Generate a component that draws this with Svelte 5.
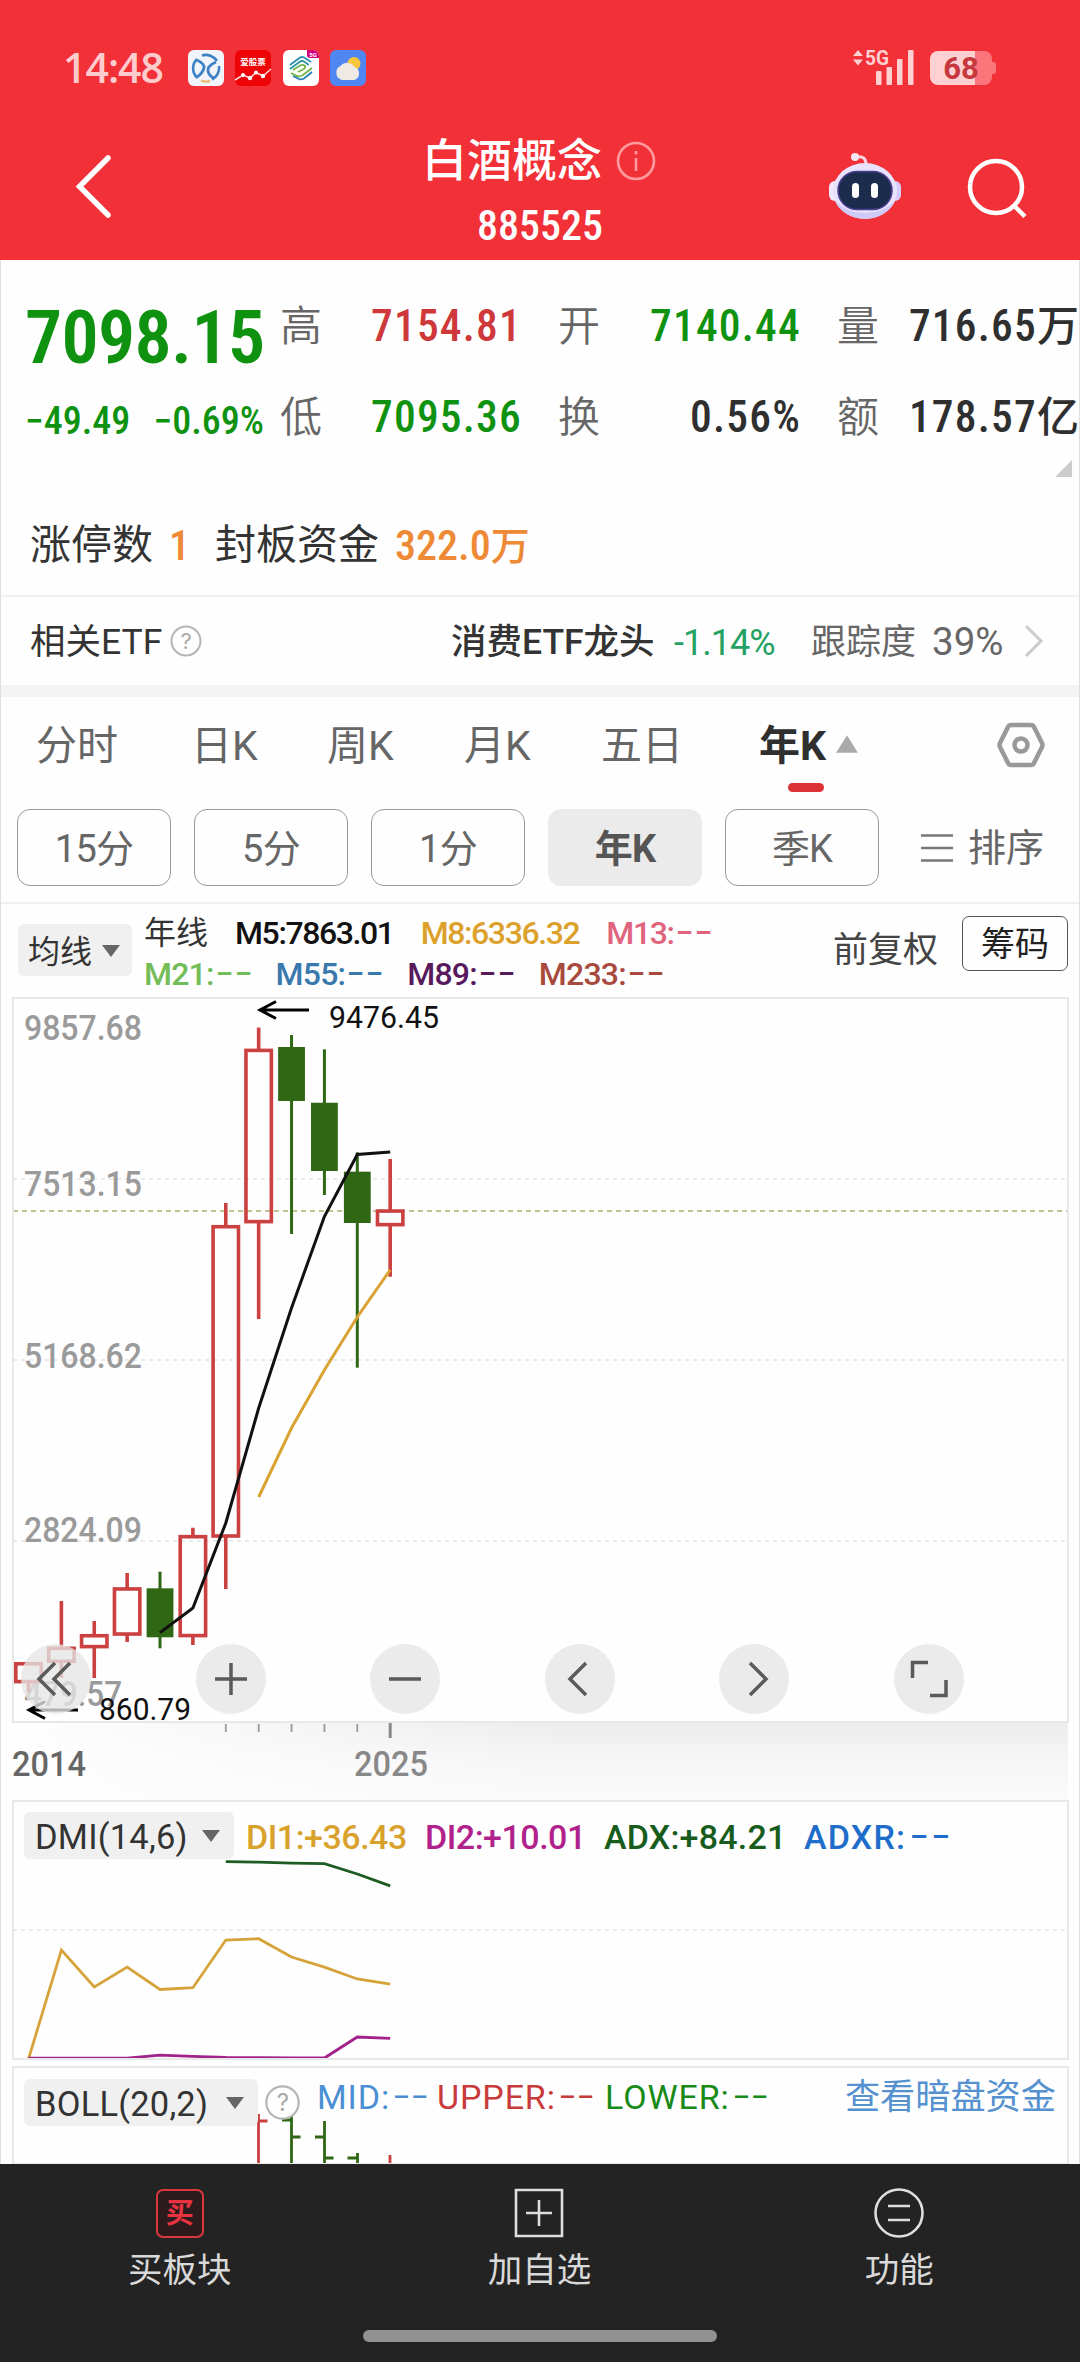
<script>
    //Quote header
    const quotes = [
        { label: "高", value: "7154.81", tone: "up" },
        { label: "开", value: "7140.44", tone: "down" },
        { label: "量", value: "716.65", unit: "万", tone: "flat" },
        { label: "低", value: "7095.36", tone: "down" },
        { label: "换", value: "0.56%", tone: "flat" },
        { label: "额", value: "178.57", unit: "亿", tone: "flat" }
    ];

    const tabs = ["分时", "日K", "周K", "月K", "五日"];
    const periods = ["15分", "5分", "1分", "年K", "季K"];
    let period = $state("年K");

    const averages = [
        [["M5:7863.01", "m5"], ["M8:6336.32", "m8"], ["M13:--", "m13"]],
        [["M21:--", "m21"], ["M55:--", "m55"], ["M89:--", "m89"], ["M233:--", "m233"]]
    ];
    const dmi = [["DI1:+36.43", "di1"], ["DI2:+10.01", "di2"], ["ADX:+84.21", "adx"], ["ADXR:--", "adxr"]];
    const boll = [["MID:--", "mid"], ["UPPER:--", "upper"], ["LOWER:--", "lower"]];

    //Main chart: [open, close, high, low] for each year
    const top = 9857.68;
    const bottom = 479.57;
    const chartH = 724;
    const candles = [
        [1003, 1234, 1257, 860.79],
        [1266, 1434, 2047, 1050],
        [1456, 1597, 1788, 1050],
        [1619, 2203, 2410, 1516],
        [2211, 1577, 2427, 1434],
        [1599, 2880, 2997, 1477],
        [2889, 6895, 7202, 2203],
        [6961, 9179, 9476.45, 5700],
        [9223, 8524, 9378, 6801],
        [8501, 7617, 9193, 7306],
        [7608, 6943, 7859, 5069],
        [6922, 7098.15, 7772, 6248]
    ];
    const ma5 = [1637, 1956, 3057, 4547, 5842, 7027, 7830, 7863];
    const ma8 = [3394, 4288, 5039, 5726, 6336];
    const scale = [
        ["9857.68", 42],
        ["7513.15", 198],
        ["5168.62", 370],
        ["2824.09", 544],
        ["479.57", 708]
    ];

    //DMI panel
    const di1 = [0, 53, 35, 44.7, 33.8, 34.7, 57.9, 58.5, 49.6, 44.7, 38.9, 36.43];
    const di2 = [0.4, 0.4, 0.4, 0.4, 1.9, 1.3, 0.8, 0.7, 0.6, 0.5, 10.7, 10.01];
    const adx = [96, 95.7, 95.3, 95, 90, 84.21];

    const cx = (i) => 15.5 + i * 32.88;
    const py = (p) => ((top - p) / (top - bottom)) * chartH;
    const dy = (v) => 258 - v * 2.056;

    //Series are right aligned on the last candle
    function line(values, toY) {
        const start = candles.length - values.length;
        return values.map((v, i) => `${cx(start + i).toFixed(1)},${toY(v).toFixed(1)}`).join(" ");
    }
</script>

<!-- Empty readings get wider dashes -->
{#snippet reading(text, color)}
    {#if text.endsWith("--")}
        <span class={color}>{text.slice(0, -2)}<i class="dash">--</i></span>
    {:else}
        <span class={color}>{text}</span>
    {/if}
{/snippet}

<div class="page">
    <header>
        <div class="status">
            <span class="time">14:48</span>
            <div class="apps">
                <svg viewBox="0 0 36 36">
                    <rect width="36" height="36" rx="6" fill="#f1f5fb"/>
                    <path d="M9.500 28A13 13 0 0 1 9 9M14 5.500A13 13 0 0 1 29 11M31 16A13 13 0 0 1 24 29.500" fill="none" stroke="#3f82c4" stroke-width="2.600"/>
                    <path d="M13 30.500a13 13 0 0 0 9 0.500" fill="none" stroke="#e9bd72" stroke-width="2.400"/>
                    <path d="M9 10Q17 14 16 18Q14 24 9 27M28 12Q19 16 20 21Q21 26 26 28" fill="none" stroke="#3f82c4" stroke-width="2.800"/>
                </svg>
                <svg viewBox="0 0 36 36">
                    <rect width="36" height="36" rx="6" fill="#ee0406"/>
                    <text x="18" y="15" class="app-name">爱股票</text>
                    <path d="M0 30L8 25L15 28L21 22.500L28 26L36 19" fill="none" stroke="#ffd9d9" stroke-width="1.500"/>
                    <g fill="#fff"><circle cx="8" cy="25" r="2"/><circle cx="15" cy="28" r="2.200"/><circle cx="21" cy="22.500" r="2"/><circle cx="28" cy="26" r="2.200"/></g>
                </svg>
                <svg viewBox="0 0 36 36">
                    <rect width="36" height="36" rx="6" fill="#fff"/>
                    <g fill="none" stroke-width="1.900">
                        <path d="M7 15L17 7.500Q19 6.500 21 7.500L28 12" stroke="#2f8fae"/>
                        <path d="M7 19L17 11.500Q19 10.500 21 11.500L26 15" stroke="#2f93a4"/>
                        <path d="M10 20L17 15.500Q20 14 22 16Q23 18 20 19.500L15 22" stroke="#74b84a"/>
                        <path d="M8 23L14 26Q17 27 20 25L29 18" stroke="#74b84a"/>
                        <path d="M10 26L16 29Q18 30 21 28.500L29 22" stroke="#2681b5"/>
                    </g>
                    <path d="M24 0h6a6 6 0 0 1 6 6v2H27a3 3 0 0 1-3-3z" fill="#d4007c"/>
                    <text x="30" y="7" class="app-badge">5G</text>
                </svg>
                <svg viewBox="0 0 36 36">
                    <rect width="36" height="36" rx="6" fill="#4f86f0"/>
                    <circle cx="24" cy="13.500" r="6.500" fill="#fbc53d"/>
                    <path d="M12 30a7.500 7.500 0 0 1-1.500-14a8.500 8.500 0 0 1 14 1A6.800 6.800 0 0 1 24 30z" fill="#eee9e2"/>
                </svg>
            </div>
            <svg class="signal" viewBox="0 0 64 36">
                <g fill="#ffd0d2">
                    <path d="M0 6L5 0L10 6zM0 9.500L5 15.500L10 9.500z"/>
                    <rect x="23" y="21" width="5.500" height="14" rx="1"/>
                    <rect x="33.500" y="17" width="5.500" height="18" rx="1"/>
                    <rect x="44" y="9" width="5.500" height="26" rx="1"/>
                    <rect x="55" y="0" width="5.500" height="35" rx="1"/>
                    <text x="12" y="15" class="net" textLength="24" lengthAdjust="spacingAndGlyphs">5G</text>
                </g>
            </svg>
            <div class="battery"><span>68</span></div>
        </div>
        <div class="bar">
            <svg class="back" viewBox="0 0 40 66"><path d="M36 5L7.500 33.500L36 62" fill="none" stroke="#fff" stroke-width="5.500" stroke-linecap="round"/></svg>
            <div class="title">
                <h1>白酒概念
                    <svg viewBox="0 0 40 40"><circle cx="20" cy="20" r="18" /><path d="M20 17v13M20 10v3.500"/></svg>
                </h1>
                <p>885525</p>
            </div>
            <svg class="robot" viewBox="0 0 72 68">
                <path d="M26 5q11-2 11 7" fill="none" stroke="#f7d3de" stroke-width="3"/>
                <circle cx="26" cy="5" r="4" fill="#f4e6f4"/>
                <rect x="0" y="29" width="14" height="20" rx="6" fill="#f3e8fb"/>
                <rect x="58" y="29" width="14" height="20" rx="6" fill="#d5cdfb"/>
                <ellipse cx="36" cy="39" rx="32" ry="28" fill="#e9e2fc"/>
                <path d="M36 67a32 28 0 0 0 30-18q-12 12-30 12t-30-12a32 28 0 0 0 30 18" fill="#cfc9f6"/>
                <rect x="9" y="19.500" width="54" height="38" rx="19" fill="#1b2c4c" stroke="#4b3f92" stroke-width="1.500"/>
                <rect x="23" y="31" width="7" height="15" rx="3.500" fill="#fff"/>
                <rect x="42" y="31" width="7" height="15" rx="3.500" fill="#fff"/>
            </svg>
            <svg class="search" viewBox="0 0 62 62"><circle cx="29" cy="30" r="26"/><path d="M47.500 49L58 59.500"/></svg>
        </div>
    </header>

    <section class="quote">
        <div class="last">
            <strong>7098.15</strong>
            <div class="change"><span>−49.49</span><span>−0.69%</span></div>
        </div>
        <div class="cells">
            {#each quotes as q}
                <span class="label">{q.label}</span>
                <span class="value {q.tone}">{q.value}{#if q.unit}<i>{q.unit}</i>{/if}</span>
            {/each}
        </div>
        <div class="corner"></div>
    </section>

    <section class="limit">
        <span>涨停数</span><b>1</b><span>封板资金</span><b>322.0<i>万</i></b>
    </section>

    <section class="etf">
        <span class="etf-name">相关ETF</span>
        <svg class="help" viewBox="0 0 32 32"><circle cx="16" cy="16" r="14.500"/><text x="16" y="24">?</text></svg>
        <span class="fund">消费ETF龙头</span>
        <span class="fund-pct">-1.14%</span>
        <span class="track">跟踪度</span>
        <span class="track-pct">39%</span>
        <svg class="more" viewBox="0 0 20 34"><path d="M2 2L17 17L2 32"/></svg>
    </section>

    <nav class="tabs">
        {#each tabs as tab}
            <span>{tab}</span>
        {/each}
        <span class="active">年K
            <svg viewBox="0 0 22 18"><path d="M11 1L21 17H1z"/></svg>
        </span>
        <svg class="setting" viewBox="0 0 48 46">
            <path d="M14 3H34Q36 3 37 5L45 21Q46 23 45 25L37 41Q36 43 34 43H14Q12 43 11 41L3 25Q2 23 3 21L11 5Q12 3 14 3z"/>
            <circle cx="24" cy="23" r="6.500"/>
        </svg>
    </nav>

    <div class="periods">
        {#each periods as p}
            <button class:on={period === p} onclick={() => (period = p)}>{p}</button>
        {/each}
        <span class="sort">
            <svg viewBox="0 0 32 30"><path d="M0 2.500H32M0 15H32M0 27.500H32"/></svg>
            排序
        </span>
    </div>

    <div class="legend">
        <span class="pill">均线<i class="caret"></i></span>
        <div class="ma">
            {#each averages as row, r}
                <div class="ma-row">
                    {#if r === 0}<span class="ma-name">年线</span>{/if}
                    {#each row as [text, color]}
                        {@render reading(text, color)}
                    {/each}
                </div>
            {/each}
        </div>
        <span class="adjust">前复权</span>
        <span class="chips">筹码</span>
    </div>

    <div class="chart">
        <svg width="1055" height="724" viewBox="0 0 1055 724">
            {#each [181, 362, 543] as y}
                <line x1="0" x2="1055" y1={y} y2={y} class="grid"/>
            {/each}
            <line x1="0" x2="1055" y1={py(7098.15)} y2={py(7098.15)} class="current"/>
            {#each scale as [text, y]}
                <text x="11" {y} class="scale" textLength={text.length > 6 ? 118 : 98} lengthAdjust="spacingAndGlyphs">{text}</text>
            {/each}
            {#each candles as [open, close, high, low], i}
                {#if close > open}
                    <path d="M{cx(i)} {py(high)}V{py(close)}M{cx(i)} {py(open)}V{py(low)}" class="rise"/>
                    <rect x={cx(i) - 12.7} y={py(close)} width="25.4" height={py(open) - py(close)} class="rise"/>
                {:else}
                    <path d="M{cx(i)} {py(high)}V{py(low)}" class="fall"/>
                    <rect x={cx(i) - 13.4} y={py(open)} width="26.8" height={py(close) - py(open)} class="fall-body"/>
                {/if}
            {/each}
            <polyline points={line(ma5, py)} class="line-ma5"/>
            <polyline points={line(ma8, py)} class="line-ma8"/>
            <path d="M296 12H247M263 3.500L247 12L263 20.500" class="arrow"/>
            <text x="316" y="29.500" class="mark" textLength="110" lengthAdjust="spacingAndGlyphs">9476.45</text>
            <path d="M65 712H16M32 703.500L16 712L32 720.500" class="arrow"/>
            <text x="86" y="721.500" class="mark" textLength="92" lengthAdjust="spacingAndGlyphs">860.79</text>
        </svg>
        <div class="tools">
            <svg viewBox="0 0 70 70"><circle cx="35" cy="35" r="35"/><path d="M34 19L18 35L34 51M49 19L33 35L49 51"/></svg>
            <svg viewBox="0 0 70 70"><circle cx="35" cy="35" r="35"/><path d="M19 35H51M35 19V51"/></svg>
            <svg viewBox="0 0 70 70"><circle cx="35" cy="35" r="35"/><path d="M19 35H51"/></svg>
            <svg viewBox="0 0 70 70"><circle cx="35" cy="35" r="35"/><path d="M41 19L25 35L41 51"/></svg>
            <svg viewBox="0 0 70 70"><circle cx="35" cy="35" r="35"/><path d="M31 19L47 35L31 51"/></svg>
            <svg viewBox="0 0 70 70"><circle cx="35" cy="35" r="35"/><path d="M18.500 34V18.500H34M36 51.500H52V36"/></svg>
        </div>
    </div>

    <div class="axis">
        <svg width="1055" height="79" viewBox="0 0 1055 79">
            {#each [6, 7, 8, 9, 10] as i}
                <line x1={cx(i)} x2={cx(i)} y1="2" y2="10" class="tick"/>
            {/each}
            <line x1={cx(11)} x2={cx(11)} y1="1" y2="16" class="tick last-tick"/>
            <text x="-1" y="53.500" class="year first" textLength="74" lengthAdjust="spacingAndGlyphs">2014</text>
            <text x="341" y="53.500" class="year" textLength="74" lengthAdjust="spacingAndGlyphs">2025</text>
        </svg>
    </div>

    <div class="panel dmi">
        <svg width="1055" height="258" viewBox="0 0 1055 258">
            <line x1="0" x2="1055" y1="129" y2="129" class="grid"/>
            <polyline points={line(adx, dy)} stroke="#1d5c22"/>
            <polyline points={line(di1, dy)} stroke="#d6a33a"/>
            <polyline points={line(di2, dy)} stroke="#a2228a"/>
        </svg>
        <div class="head">
            <span class="pill">DMI(14,6)<i class="caret"></i></span>
            {#each dmi as [text, color]}
                {@render reading(text, color)}
            {/each}
        </div>
    </div>

    <div class="panel boll">
        <svg width="1055" height="98" viewBox="0 0 1055 98">
            <path d="M245.500 47V98M245.500 54H254.500M377 88V98" stroke="#c9403f"/>
            <path d="M278.500 49V98M269 53H278.500M278.500 70H287.500M311.500 54V98M302 70H311.500M311.500 91H320.500M344.500 86V98M334.500 91H344.500" stroke="#2f6715"/>
        </svg>
        <div class="head">
            <span class="pill">BOLL(20,2)<i class="caret"></i></span>
            <svg class="help" viewBox="0 0 32 32"><circle cx="16" cy="16" r="14.800"/><text x="16" y="24">?</text></svg>
            {#each boll as [text, color]}
                {@render reading(text, color)}
            {/each}
            <span class="dark-pool">查看暗盘资金</span>
        </div>
    </div>

    <footer>
        <div class="actions">
            <div>
                <span class="buy">买</span>
                买板块
            </div>
            <div>
                <svg viewBox="0 0 50 50"><path d="M2 2H48V48H2zM25 12V38M12 25H38"/></svg>
                加自选
            </div>
            <div>
                <svg viewBox="0 0 50 50"><circle cx="25" cy="25" r="23.500"/><path d="M14 18H36M14 32H36"/></svg>
                功能
            </div>
        </div>
        <div class="home"></div>
    </footer>
</div>

<style>
    :global(body){
        margin: 0;
        background-color: #fff;
    }

    .page{
        position: relative;
        width: 1080px;
        height: 2362px;
        overflow: hidden;
        background-color: #fefefe;
        font-family: "Roboto", "Noto Sans CJK SC", sans-serif;
        color: #333;
        line-height: 1;
    }

    .page::after{
        content: "";
        position: absolute;
        inset: 260px 0 198px;
        border: solid #dedede;
        border-width: 0 1px;
        pointer-events: none;
    }

    .page svg{
        display: block;
        flex: none;
        overflow: visible;
    }

    i{
        font-style: normal;
    }

    span{
        white-space: nowrap;
    }

    .dash{
        display: inline-block;
        width: 34px;
        margin-left: 2px;
        letter-spacing: 1px;
        transform: translateY(-2px) scaleX(1.6);
        transform-origin: left center;
    }

    /*===Header===*/
    header{
        height: 260px;
        background-color: #f23037;
        color: #fff;
    }

    .status{
        display: flex;
        height: 36px;
        padding: 50px 84px 0 63px;
        align-items: center;
    }

    .time{
        width: 125px;
        margin-top: -3px;
        color: #ffccce;
        font: 600 41px/36px "Open Sans", sans-serif;
        letter-spacing: -1px;
    }

    .apps{
        display: flex;
        gap: 11.3px;
        flex: 1;
    }

    .apps svg{
        width: 36px;
        height: 36px;
    }

    .app-name{
        font: 700 8.500px "Noto Sans CJK SC", sans-serif;
        fill: #fff;
        text-anchor: middle;
    }

    .app-badge{
        font: 700 6px "Roboto", sans-serif;
        fill: #fff;
        text-anchor: middle;
    }

    .signal{
        width: 64px;
        height: 36px;
        margin-right: 13px;
    }

    .net{
        font: 700 21px "Roboto", sans-serif;
    }

    .battery{
        position: relative;
        width: 62px;
        height: 34px;
        border-radius: 8px;
        background: linear-gradient(90deg, #ffd0d2 45px, #fb767b 45px);
        text-align: center;
        color: #c6383d;
        font: 700 31px/35px "Roboto", sans-serif;
        margin-right: 4px;
    }

    .battery::after{
        content: "";
        position: absolute;
        right: -4px;
        top: 11px;
        width: 4px;
        height: 12px;
        border-radius: 0 3px 3px 0;
        background-color: #fb767b;
    }

    .bar{
        display: grid;
        grid-template-columns: 400px 280px 149px 137px 114px;
        padding-top: 50px;
    }

    .back{
        width: 40px;
        height: 66px;
        margin: 17px 0 0 72px;
    }

    .title{
        text-align: left;
    }

    h1{
        display: flex;
        align-items: center;
        gap: 14px;
        height: 50px;
        margin: 0 0 0 22px;
        font-size: 45px;
        font-weight: 500;
        white-space: nowrap;
    }

    h1 svg{
        width: 40px;
        height: 40px;
        fill: none;
        stroke: #ff9a9e;
        stroke-width: 2.600;
    }

    .title p{
        margin: 19px 0 0 77px;
        font-size: 42px;
        font-weight: 500;
        font-stretch: 75%;
        letter-spacing: 0;
    }

    .robot{
        grid-column: 4;
        width: 72px;
        height: 68px;
        margin-top: 16px;
    }

    .search{
        width: 62px;
        height: 62px;
        margin: 21px 0 0 1px;
        fill: none;
        stroke: #fff;
        stroke-width: 4.500;
    }

    /*===Quote===*/
    .quote{
        display: grid;
        grid-template-columns: 280px 1fr;
        height: 217px;
        position: relative;
    }

    .last{
        padding: 41px 0 0 25px;
        color: #0f9210;
    }

    .last strong{
        display: block;
        font-size: 74px;
        font-weight: 600;
        font-stretch: 75%;
        letter-spacing: -0.700px;
    }

    .change{
        display: flex;
        justify-content: space-between;
        width: 239px;
        margin-top: 27px;
        font-size: 38px;
        font-weight: 500;
        font-stretch: 75%;
    }

    .cells{
        display: grid;
        grid-template-columns: 44px 198px 36px 44px 199px 36px 44px 198px;
        grid-template-rows: 91px 91px;
        padding-top: 21px;
        align-items: center;
    }

    .cells .label:nth-of-type(3), .cells .label:nth-of-type(9){
        grid-column: 4;
    }

    .cells .label:nth-of-type(5), .cells .label:nth-of-type(11){
        grid-column: 7;
    }

    .label{
        color: #666;
        font-size: 42px;
        font-weight: 350;
    }

    .value{
        text-align: right;
        font-size: 43.5px;
        font-weight: 500;
        font-stretch: 75%;
        letter-spacing: 1.200px;
    }

    .value i{
        font-size: 42px;
        letter-spacing: 0;
    }

    .up{
        color: #cf383a;
    }

    .down{
        color: #0f9210;
    }

    .flat{
        color: #2f2f2f;
    }

    .corner{
        position: absolute;
        right: 8px;
        bottom: 0;
        border-left: 17px solid transparent;
        border-bottom: 17px solid #ccc;
    }

    .limit{
        display: flex;
        align-items: center;
        height: 118px;
        padding: 19px 0 0 30px;
        box-sizing: border-box;
        font-size: 41px;
    }

    .limit b{
        margin: 0 25px 0 16px;
        color: #ee8a35;
        font-size: 42px;
        font-weight: 500;
        font-stretch: 75%;
    }

    .limit b i{
        font-size: 39px;
    }

    /*===ETF===*/
    .etf{
        display: flex;
        align-items: center;
        height: 90px;
        box-sizing: border-box;
        border-top: 2px solid #f1f1f1;
        padding: 3px 0 0 30px;
        font-size: 35.500px;
    }

    .help{
        width: 32px;
        height: 32px;
        fill: none;
        stroke: #b5b5b5;
        stroke-width: 2;
    }

    .etf .help{
        margin-top: -3px;
    }

    .help text{
        font: 22px "Inter", sans-serif;
        fill: #aaa;
        stroke: none;
        text-anchor: middle;
    }

    .etf-name{
        width: 140px;
    }

    .fund{
        width: 223px;
        margin-left: 249px;
        font-weight: 500;
    }

    .fund-pct{
        width: 137px;
        color: #23a163;
        letter-spacing: -1px;
        font-size: 36px;
    }

    .track{
        width: 121px;
        color: #666;
        font-size: 35px;
    }

    .track-pct{
        width: 92px;
        color: #666;
        font-size: 38.500px;
    }

    .more{
        width: 20px;
        height: 34px;
        margin-top: -3px;
        fill: none;
        stroke: #ccc;
        stroke-width: 3;
    }

    /*===Tabs===*/
    .tabs{
        display: grid;
        grid-template-columns: 155px 136px 137px 137px 158px 238px 48px;
        align-items: center;
        height: 98px;
        padding-left: 36px;
        border-top: 12px solid #f4f4f4;
        color: #666;
        font-size: 41px;
    }

    .tabs .active{
        position: relative;
        display: flex;
        align-items: center;
        gap: 9px;
        color: #2f2f2f;
        font-weight: 700;
    }

    .active svg{
        width: 24px;
        height: 20px;
        margin-top: -5px;
        fill: #aaa;
    }

    .tabs .active::after{
        content: "";
        position: absolute;
        left: 29px;
        top: 57px;
        width: 36px;
        height: 9px;
        border-radius: 5px;
        background-color: #dd3336;
    }

    .setting{
        width: 48px;
        height: 46px;
        margin-top: -3px;
        fill: none;
        stroke: #999;
        stroke-width: 4.500;
    }

    .periods{
        display: flex;
        align-items: center;
        gap: 23px;
        height: 109px;
        box-sizing: border-box;
        padding: 0 0 2px 17px;
        border-bottom: 2px solid #f1f1f1;
    }

    .periods button{
        width: 154px;
        height: 77px;
        padding: 3px 0 0;
        border: 1px solid #999;
        border-radius: 13px;
        background: none;
        color: #666;
        font-family: inherit;
        font-size: 38px;
        line-height: 1;
        letter-spacing: -0.800px;
    }

    .periods .on{
        border-color: #ebebeb;
        background-color: #ebebeb;
        color: #555;
        font-weight: 700;
    }

    .sort{
        display: flex;
        align-items: center;
        gap: 15px;
        margin-left: 19px;
        color: #666;
        font-size: 38px;
    }

    .sort svg{
        width: 32px;
        height: 30px;
        stroke: #777;
        stroke-width: 2.500;
    }

    /*===Legend===*/
    .legend{
        display: flex;
        height: 94px;
        align-items: flex-start;
        padding-left: 18px;
    }

    .pill{
        display: flex;
        align-items: center;
        justify-content: space-between;
        box-sizing: border-box;
        padding: 2px 13px 0 11px;
        border-radius: 6px;
        background-color: #f0f0f0;
        color: #333;
    }

    .legend .pill{
        width: 114px;
        height: 52px;
        margin-top: 20px;
        padding: 3px 12px 0 10px;
        font-size: 32px;
    }

    .caret{
        border: 9px solid transparent;
        border-top: 12px solid #666;
        border-bottom: 0;
        margin-top: -2px;
    }

    .ma{
        width: 689px;
        padding: 9px 0 0 12px;
        box-sizing: border-box;
        margin-right: 12px;
        font-size: 32px;
        font-weight: 500;
    }

    .ma-row{
        display: flex;
        align-items: center;
        gap: 27px;
        height: 40.500px;
        letter-spacing: -1.400px;
    }

    .ma-row:last-child{
        gap: 26px;
        letter-spacing: -0.800px;
    }

    .ma-name{
        font-weight: 400;
        letter-spacing: 0;
    }

    .m5{ color: #111; }
    .m8{ color: #dba12a; }
    .m13{ color: #e0647d; }
    .m21{ color: #72bd57; }
    .m55{ color: #3a79ad; }
    .m89{ color: #571a5c; }
    .m233{ color: #a84a3d; }

    .adjust{
        width: 129px;
        margin-top: 29px;
        color: #444;
        font-size: 35px;
    }

    .chips{
        width: 104px;
        height: 53px;
        margin-top: 12px;
        border: 1.500px solid #555;
        border-radius: 7px;
        color: #222;
        font-size: 34px;
        line-height: 55px;
        text-align: center;
    }

    /*===Chart===*/
    .chart{
        position: relative;
        width: 1055px;
        height: 724px;
        margin-left: 13px;
        outline: 2px solid #e8e8e8;
        outline-offset: -1px;
    }

    .grid{
        stroke: #e3e3e3;
        stroke-width: 1.500;
        stroke-dasharray: 4 4;
    }

    .current{
        stroke: #b0ae72;
        stroke-width: 1.500;
        stroke-dasharray: 5 4;
    }

    .scale{
        font: 500 35px "Roboto", sans-serif;
        fill: #9a9a9a;
    }

    .rise{
        fill: none;
        stroke: #cb4041;
        stroke-width: 3.600;
    }

    .fall{
        stroke: #2f6715;
        stroke-width: 3;
    }

    .fall-body{
        fill: #2f6715;
    }

    .line-ma5, .line-ma8{
        fill: none;
        stroke: #111;
        stroke-width: 3;
    }

    .line-ma8{
        stroke: #d9a233;
    }

    .arrow{
        fill: none;
        stroke: #000;
        stroke-width: 3;
    }

    .mark{
        font: 400 30.500px "Roboto", sans-serif;
        fill: #111;
    }

    .tools{
        position: absolute;
        left: 8px;
        top: 646px;
        display: flex;
        gap: 104.500px;
    }

    .tools svg{
        width: 70px;
        height: 70px;
        fill: none;
        stroke: #5a5a5a;
        stroke-width: 3.500;
    }

    .tools circle{
        fill: rgba(230, 230, 230, 0.78);
        stroke: none;
    }

    .axis{
        width: 1055px;
        height: 79px;
        margin-left: 13px;
        background: linear-gradient(90deg, #fefefe 0, #fefefe00 560px), linear-gradient(#ececec, #f6f6f6 40px, #fafafa);
    }

    .tick{
        stroke: #999;
        stroke-width: 1.800;
    }

    .last-tick{
        stroke: #888;
        stroke-width: 3;
    }

    .year{
        font: 500 35px "Roboto", sans-serif;
        fill: #888;
    }

    .first{
        fill: #666;
    }

    /*===Indicators===*/
    .panel{
        position: relative;
        width: 1055px;
        margin-left: 13px;
        outline: 2px solid #e8e8e8;
        outline-offset: -1px;
    }

    .panel > svg{
        fill: none;
        stroke-width: 2.800;
    }

    .dmi{
        height: 258px;
        margin-bottom: 8px;
    }

    .boll{
        height: 97px;
    }

    .head{
        position: absolute;
        left: 11px;
        top: 11px;
        right: 12px;
        display: flex;
        align-items: center;
        height: 47px;
        font-size: 34px;
        font-weight: 500;
        letter-spacing: -0.500px;
    }

    .head > span:not(.pill){
        padding-top: 2px;
    }

    .head .pill{
        height: 47px;
        width: 210px;
        margin-right: 12px;
        padding: 3px 14px 0 11px;
        font-size: 34.500px;
        font-weight: 400;
        letter-spacing: 0.200px;
    }

    .boll .pill{
        width: 234px;
        margin-right: 7px;
    }

    .boll .help{
        width: 35px;
        height: 35px;
        margin-right: 17px;
    }

    .di1{ width: 179px; color: #d9a22c; }
    .di2{ width: 179px; color: #b0218c; }
    .adx{ width: 200px; color: #175c1c; }
    .adxr{ color: #1f6dcb; }
    .mid{ width: 120px; color: #4a8fd4; }
    .upper{ width: 168px; color: #c93b3b; }
    .lower{ flex: 1; color: #178a17; }

    .head .adx{
        letter-spacing: 0.200px;
    }

    .head .adxr{
        letter-spacing: 1.200px;
    }

    .head .mid, .head .upper, .head .lower, .head .dark-pool{
        margin-top: -14px;
        font-weight: 400;
        letter-spacing: 0.900px;
    }

    .boll .head{
        top: 12px;
    }

    .head .dark-pool{
        margin-top: -12px;
        color: #5591cf;
        font-size: 35.200px;
        letter-spacing: 0;
    }

    .head .dash{
        margin-left: 4px;
        letter-spacing: 2px;
    }

    /*===Bottom bar===*/
    footer{
        position: relative;
        height: 198px;
        background-color: #232323;
        color: #d9d9d9;
    }

    .actions{
        display: grid;
        grid-template-columns: 1fr 1fr 1fr;
        width: 1079px;
        padding-top: 24px;
        font-size: 34.500px;
    }

    .actions div{
        display: flex;
        flex-direction: column;
        align-items: center;
        gap: 15px;
    }

    .actions svg{
        width: 50px;
        height: 50px;
        fill: none;
        stroke: #dedede;
        stroke-width: 2.600;
    }

    .buy{
        width: 44px;
        height: 45px;
        margin-top: 1px;
        border: 2.500px solid #d8383b;
        border-radius: 7px;
        background-color: #2c1b1d;
        color: #ea3340;
        font-size: 28px;
        font-weight: 700;
        line-height: 45px;
        text-align: center;
    }

    .home{
        width: 354px;
        height: 12px;
        margin: 42px auto 0;
        border-radius: 6px;
        background-color: #929292;
    }
</style>
